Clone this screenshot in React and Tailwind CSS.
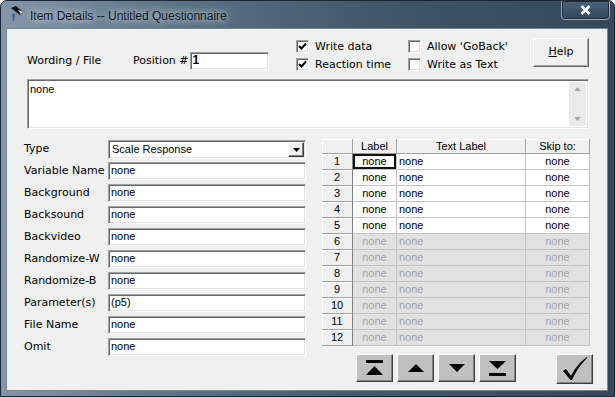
import React from 'react';

const ui = "font-['DejaVu_Sans',sans-serif] text-[11px] text-black";
const arial = "font-['Liberation_Sans',Arial,sans-serif]";
const sunken =
  'bg-white border border-t-[#a0a0a0] border-l-[#a0a0a0] border-r-white border-b-white shadow-[inset_1px_1px_0_#696969,inset_-1px_-1px_0_#e3e3e3]';
const raised =
  'border border-t-white border-l-white border-r-[#404040] border-b-[#404040] shadow-[inset_-1px_-1px_0_#808080]';

const fields = [
  ['Variable Name', 'none'],
  ['Background', 'none'],
  ['Backsound', 'none'],
  ['Backvideo', 'none'],
  ['Randomize-W', 'none'],
  ['Randomize-B', 'none'],
  ['Parameter(s)', '(p5)'],
  ['File Name', 'none'],
  ['Omit', 'none'],
];

const rows = Array.from({ length: 12 }, (_, i) => i + 1);

const Check = () => (
  <svg width="9" height="9" viewBox="0 0 9 9">
    <path d="M1 4 L3.5 6.5 L8 1.5" fill="none" stroke="#000" strokeWidth="2" />
  </svg>
);

const CheckBox = ({ checked, label }) => (
  <div className="flex items-center h-[13px]">
    <div className={`w-[13px] h-[13px] flex items-center justify-center ${sunken}`}>
      {checked && <Check />}
    </div>
    <span className="ml-[6px] leading-[13px]">{label}</span>
  </div>
);

const NavButton = ({ children }) => (
  <button className={`w-[37px] h-[28px] bg-[#c0c0c0] flex items-center justify-center ${raised}`}>
    {children}
  </button>
);

export default function App() {
  return (
    <div className={`w-[615px] h-[397px] flex flex-col overflow-hidden rounded-t-[7px] border border-[#1b2533] bg-[linear-gradient(90deg,#8496a8_0%,#5b7086_30%,#3f5369_65%,#34475d_100%)] ${ui}`}>
      {/* title bar */}
      <div className="h-[27px] flex items-start shrink-0 relative">
        <svg className="ml-[8px] mt-[4px]" width="16" height="17" viewBox="0 0 16 17">
          <path d="M2 3 L7 1 L14 7 L11 10 Z" fill="#111" />
          <path d="M9 5 L14 7 L12 9 Z" fill="#fff" />
          <path d="M3 9 L6 9 L5 16 L4 16 Z" fill="#2a5fb0" />
        </svg>
        <span className="ml-[5px] mt-[6px] font-['Liberation_Sans',Arial,sans-serif] text-[12px] text-[#0d1620] [text-shadow:0_0_6px_#c8d4de,0_0_10px_#c8d4de]">
          Item Details -- Untitled Questionnaire
        </span>
        <div className="ml-auto mr-[4px] -mt-px w-[49px] h-[20px] rounded-b-[4px] border border-[#9aa8b6] shadow-[inset_0_0_0_1px_#1f2c3b] bg-[linear-gradient(180deg,#4c6178,#33465b)] flex items-center justify-center">
          <svg width="11" height="10" viewBox="0 0 11 10">
            <path d="M1.5 1 L9.5 9 M9.5 1 L1.5 9" stroke="#fff" strokeWidth="2.6" />
          </svg>
        </div>
      </div>

      {/* client area */}
      <div className="ml-[5px] mr-[6px] mb-[5px] flex-1 border border-[#7a8796] bg-[#f0f0f0] flex flex-col">
        {/* top row */}
        <div className="flex items-start pt-[9px] pl-[20px]">
          <div className="w-[269px] h-[32px] flex items-end">
            <span className="w-[106px] leading-[18px]">Wording / File</span>
            <span className="leading-[18px] mr-[1px]">Position #</span>
            <div className={`w-[79px] h-[18px] px-[2px] ${sunken} ${arial} text-[12px] font-bold leading-[15px]`}>1</div>
          </div>
          <div className="w-[112px] pt-[2px] flex flex-col gap-[5px]">
            <CheckBox checked label="Write data" />
            <CheckBox checked label="Reaction time" />
          </div>
          <div className="w-[125px] pt-[2px] flex flex-col gap-[5px]">
            <CheckBox label="Allow 'GoBack'" />
            <CheckBox label="Write as Text" />
          </div>
          <button className="w-[56px] h-[29px] bg-[#f0f0f0] border border-t-white border-l-white border-r-[#696969] border-b-[#696969] shadow-[inset_-1px_-1px_0_#a0a0a0] flex items-center justify-center">
            <span><span className="underline">H</span>elp</span>
          </button>
        </div>

        {/* memo */}
        <div className={`ml-[20px] mt-[8px] w-[562px] h-[50px] flex ${sunken}`}>
          <div className={`flex-1 pl-[2px] pt-[1px] ${arial} text-[11px]`}>none</div>
          <div className="w-[17px] my-[2px] mr-[2px] bg-[#eaeaea] flex flex-col items-center justify-between py-[5px]">
            <svg width="7" height="4" viewBox="0 0 7 4"><path d="M0 4 L3.5 0 L7 4 Z" fill="#a8a8a8" /></svg>
            <svg width="7" height="4" viewBox="0 0 7 4"><path d="M0 0 L3.5 4 L7 0 Z" fill="#a8a8a8" /></svg>
          </div>
        </div>

        {/* bottom section */}
        <div className="flex mt-[10px] pl-[17px]">
          {/* form */}
          <div className="w-[282px] pt-[1px] flex flex-col">
            <div className="flex items-center h-[19px] mb-[3px]">
              <span className="w-[84px]">Type</span>
              <div className={`w-[198px] h-[19px] flex items-center ${sunken}`}>
                <span className={`flex-1 pl-[3px] ${arial} text-[11px]`}>Scale Response</span>
                <div className={`w-[16px] h-[15px] mr-[1px] bg-[#f0f0f0] flex items-center justify-center ${raised}`}>
                  <svg width="7" height="4" viewBox="0 0 7 4"><path d="M0 0 L3.5 4 L7 0 Z" fill="#000" /></svg>
                </div>
              </div>
            </div>
            <div className="flex flex-col gap-[4px]">
              {fields.map(([label, value]) => (
                <div key={label} className="flex items-center h-[18px]">
                  <span className="w-[84px] whitespace-nowrap">{label}</span>
                  <div className={`w-[198px] h-[18px] pl-[2px] leading-[15px] ${sunken} ${arial} text-[11px]`}>{value}</div>
                </div>
              ))}
            </div>
          </div>

          {/* grid */}
          <div className={`ml-[16px] flex flex-col ${arial} text-[11px]`}>
            <div className="grid grid-cols-[31px_44px_129px_64px]">
              {['', 'Label', 'Text Label', 'Skip to:'].map((h, i) => (
                <div
                  key={i}
                  className="h-[15px] leading-[14px] text-center bg-[#f0f0f0] border-r border-b border-[#a0a0a0] shadow-[inset_1px_1px_0_#ffffff]"
                >
                  {h}
                </div>
              ))}
              {rows.map((n) => {
                const off = n > 5;
                const cell = off
                  ? 'bg-[#e1e1e1] text-[#a3a3a3] border-r border-b border-[#c4c4c4]'
                  : 'bg-white border-r border-b border-[#c4c4c4]';
                return (
                  <React.Fragment key={n}>
                    <div className="h-[16px] leading-[15px] text-center bg-[#f0f0f0] border-r border-b border-r-[#808080] border-b-[#a0a0a0] shadow-[inset_1px_1px_0_#ffffff]">
                      {n}
                    </div>
                    <div className={`h-[16px] leading-[15px] text-center ${cell} ${n === 1 ? 'shadow-[inset_0_0_0_2px_#111]' : ''}`}>none</div>
                    <div className={`h-[16px] leading-[15px] pl-[2px] ${cell}`}>none</div>
                    <div className={`h-[16px] leading-[15px] text-center ${cell}`}>none</div>
                  </React.Fragment>
                );
              })}
            </div>

            {/* nav buttons */}
            <div className="flex items-start mt-[8px] pl-[34px]">
              <div className="flex gap-[4px]">
                <NavButton>
                  <svg width="17" height="16" viewBox="0 0 17 16">
                    <rect x="0" y="0" width="17" height="3" fill="#000" />
                    <path d="M0 15 L8.5 6 L17 15 Z" fill="#000" />
                  </svg>
                </NavButton>
                <NavButton>
                  <svg width="16" height="8" viewBox="0 0 16 8"><path d="M0 8 L8 0 L16 8 Z" fill="#000" /></svg>
                </NavButton>
                <NavButton>
                  <svg width="16" height="8" viewBox="0 0 16 8"><path d="M0 0 L8 8 L16 0 Z" fill="#000" /></svg>
                </NavButton>
                <NavButton>
                  <svg width="17" height="15" viewBox="0 0 17 15">
                    <path d="M0 0 L8.5 8 L17 0 Z" fill="#000" />
                    <rect x="0" y="12" width="17" height="3" fill="#000" />
                  </svg>
                </NavButton>
              </div>
              <button className={`ml-[40px] w-[37px] h-[30px] bg-[#c0c0c0] flex items-center justify-center ${raised}`}>
                <svg width="26" height="26" viewBox="0 0 26 26">
                  <path d="M1 15 L4 13 L9 20 C13 12 18 6 25 1 L25.5 1.5 C19 8 14 15 10 24 L8.5 24 Z" fill="#000" />
                </svg>
              </button>
            </div>
          </div>
        </div>
      </div>
    </div>
  );
}
